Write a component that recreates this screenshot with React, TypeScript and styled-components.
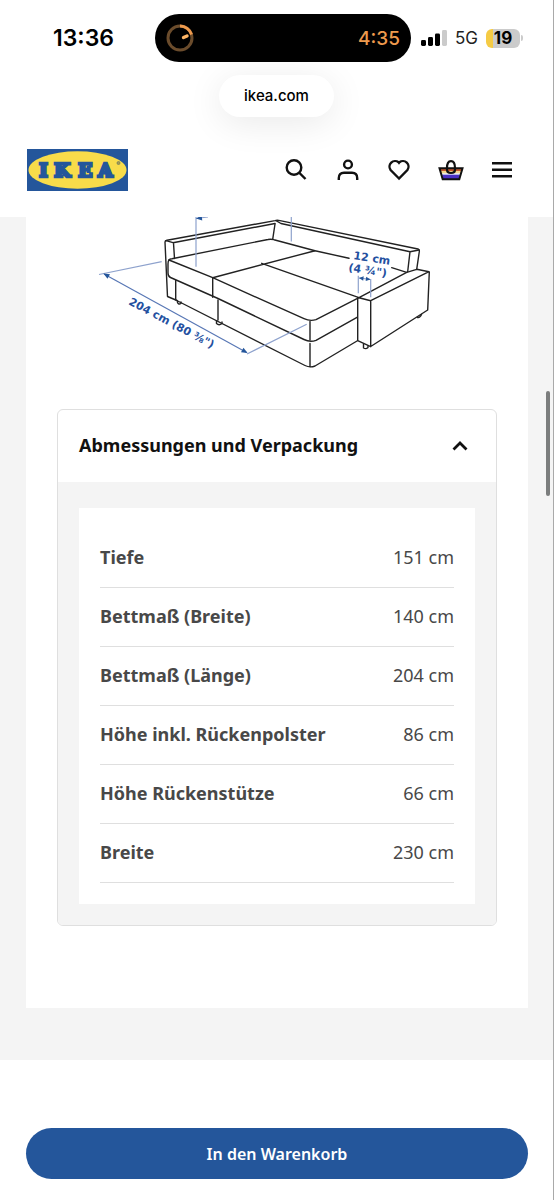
import React, { useState } from "react";
import styled, { createGlobalStyle } from "styled-components";

const GlobalStyle = createGlobalStyle`
  *, *::before, *::after { box-sizing: border-box; }
  body {
    margin: 0;
    background: #fff;
    color: #111;
    font-family: "Noto Sans", "Open Sans", sans-serif;
  }
  button { font: inherit; color: inherit; border: 0; padding: 0; background: none; cursor: pointer; }
`;

const Page = styled.div`
  position: relative;
  min-height: 100vh;
  border-right: 1px solid #a9a9a9;
  overflow-x: hidden;
`;

const StatusBar = styled.div`
  display: grid;
  grid-template-columns: 155fr 256fr 142fr;
  align-items: center;
  padding-top: 14px;
  font-family: Inter, sans-serif;
`;

const Clock = styled.time`
  padding-left: 12px;
  text-align: center;
  font-size: 23px;
  line-height: 28px;
  font-weight: 600;
  color: #000;
`;

const Island = styled.div`
  display: flex;
  align-items: center;
  justify-content: space-between;
  height: 48px;
  padding: 0 11px;
  border-radius: 24px;
  background: #000;
  color: #ee9a4d;
  font-size: 19px;
  font-weight: 500;
`;

const Signals = styled.div`
  display: flex;
  align-items: center;
  gap: 8px;
  padding-left: 10px;
  font-size: 17px;
  line-height: 24px;
  color: #222;
`;

const Battery = styled.div`
  display: flex;
  align-items: center;
  gap: 1px;
`;

const BatteryCell = styled.span`
  width: 34px;
  height: 19px;
  border-radius: 6px;
  background: linear-gradient(90deg, #f5cb45 0 7px, #cbcbcb 7px);
  color: #000;
  font-size: 17px;
  font-weight: 700;
  line-height: 19px;
  text-align: center;
`;

const BatteryTip = styled.span`
  width: 2px;
  height: 6px;
  border-radius: 0 2px 2px 0;
  background: #cbcbcb;
`;

const AddressRow = styled.div`
  display: flex;
  justify-content: center;
  padding-top: 13px;
`;

const Address = styled.div`
  padding: 0 25px;
  border-radius: 21px;
  background: #fff;
  box-shadow: 0 6px 36px rgba(0, 0, 0, 0.09);
  color: #000;
  font-family: Inter, sans-serif;
  font-size: 15px;
  line-height: 42px;
  font-weight: 500;
`;

const Header = styled.header`
  display: flex;
  align-items: center;
  justify-content: space-between;
  height: 100px;
  padding: 6px 37px 0 27px;
`;

const LogoLink = styled.a`
  display: block;
  width: 101px;
  height: 42px;
`;

const Nav = styled.nav`
  display: flex;
  justify-content: space-between;
  width: 234px;
`;

const IconButton = styled.button`
  width: 28px;
  height: 28px;
  svg { display: block; }
`;

const Main = styled.main`
  padding: 0 25px 52px 26px;
  background: #f4f4f4;
`;

const Panel = styled.section`
  padding: 0 31px 82px;
  background: #fff;
`;

const Drawing = styled.svg`
  display: block;
  width: 100%;
  margin-bottom: 31px;
`;

const Card = styled.div`
  border: 1px solid #dfdfdf;
  border-radius: 6px;
  overflow: hidden;
`;

const CardTitle = styled.h2`
  margin: 0;
`;

const Toggle = styled.button`
  display: flex;
  align-items: center;
  justify-content: space-between;
  width: 100%;
  height: 72px;
  padding: 0 25px 2px 21px;
  font-size: 18px;
  line-height: 24px;
  font-weight: 700;
  text-align: left;
`;

const CardBody = styled.div`
  padding: 26px 21px 21px;
  background: #f4f4f4;
`;

const Sheet = styled.div`
  padding: 21px;
  background: #fff;
`;

const Measures = styled.table`
  width: 100%;
  border-collapse: separate;
  border-spacing: 0;
  color: #484848;
  font-size: 18px;
  line-height: 24px;

  th, td {
    height: 59px;
    padding: 0 0 2px;
    border-bottom: 1px solid #dfdfdf;
  }
  th { font-weight: 700; text-align: left; }
  td { text-align: right; }
`;

const Footer = styled.footer`
  padding: 68px 25px 21px 26px;
`;

const BuyButton = styled.button`
  display: block;
  width: 100%;
  height: 51px;
  border-radius: 26px;
  background: #24569b;
  color: #fff;
  font-size: 16px;
  font-weight: 600;
`;

const ScrollThumb = styled.div`
  position: absolute;
  top: 391px;
  right: 3px;
  width: 4px;
  height: 105px;
  border-radius: 2px;
  background: #7b7d7d;
`;

const measures = [
  ["Tiefe", "151 cm"],
  ["Bettmaß (Breite)", "140 cm"],
  ["Bettmaß (Länge)", "204 cm"],
  ["Höhe inkl. Rückenpolster", "86 cm"],
  ["Höhe Rückenstütze", "66 cm"],
  ["Breite", "230 cm"],
];

const Timer = () => (
  <svg width="28" height="28" viewBox="0 0 28 28" fill="none">
    <circle cx="14" cy="14" r="12" stroke="#6b4c2c" strokeWidth="3" />
    <path d="M14 2A12 12 0 0 1 25.5 10.5" stroke="#ee9a4d" strokeWidth="3" />
    <path d="M17.5 13.5 21 12" stroke="#ffb565" strokeWidth="3.4" strokeLinecap="round" />
  </svg>
);

const SignalBars = () => (
  <svg width="26" height="18" viewBox="0 0 26 18">
    <rect x="0" y="11" width="5" height="6" rx="1.4" fill="#000" />
    <rect x="7" y="8" width="5" height="9" rx="1.4" fill="#000" />
    <rect x="14" y="4.500" width="5" height="12.500" rx="1.4" fill="#000" />
    <rect x="21" y="1" width="5" height="16" rx="1.4" fill="#cbcbcb" />
  </svg>
);

const Logo = () => (
  <svg width="101" height="42" viewBox="0 0 101 42">
    <rect width="101" height="42" fill="#24569b" />
    <ellipse cx="50.500" cy="21" rx="49" ry="18.700" fill="#f8dc4a" />
    <text
      x="12 27 51 71" y="27.500" fill="#24569b" stroke="#24569b" strokeWidth="2.600"
      fontFamily="DejaVu Serif, serif" fontWeight="700" fontSize="19"
    >
      IKEA
    </text>
    <circle cx="91.500" cy="14" r="1.500" fill="#a79a4d" stroke="#6e7d62" strokeWidth="0.8" />
  </svg>
);

const Icon = ({ children }: { children: React.ReactNode }) => (
  <svg width="28" height="28" viewBox="0 0 28 28" fill="none" stroke="#111" strokeWidth="2.4">
    {children}
  </svg>
);

const Arrow = ({ x, y, angle }: { x: number; y: number; angle: number }) => (
  <path d="M0 0 6 -2.600 6 2.600Z" fill="#24569b" transform={`translate(${x} ${y}) rotate(${angle})`} />
);

const SofaDrawing = () => (
  <Drawing viewBox="57 217 440 161" role="img" aria-label="Skizze des Ecksofas mit Maßen">
    <g fill="none" stroke="#222" strokeWidth="1.4" strokeLinejoin="round" strokeLinecap="round">
      <path d="M177 300.500 167.500 296.500 165 242Q165 240.700 167 240.300L275 220.600Q277 220 280 220.600L418 249Q419.500 249.500 419.400 251L416.700 269.300" />
      <path d="M166 240.700 173 242.700 275 223.500M173.500 243 174.500 258.500" />
      <path d="M276 220.700 281 223.500 410 251.700 419 250M275 224 272.700 239.300M410 251.700 407.700 271.500" />
      <path d="M169 260Q168 261 168 264V273Q168 276.500 170.500 277.500L218 298.500 304 339.500Q310 342.500 316 340.300L357 317.300" />
      <path d="M169 260Q169.500 259 172 258.700L268 239.500Q271 238.800 274 239.700L315 250.700 349 258.300M391.700 267.700 406.700 272.300" />
      <path d="M169 260 212.700 277.700 304 318.700Q310 321.500 316 319.700L359 297.700M212.700 277.700V297.300M212.700 277.700 315 250.700M261.700 263.300 359 297.700" />
      <path d="M175.700 280.500V300L305 365.500Q310 368 315 366L357 341M218 300V320M310 321.500V340M310 343.500V367" />
      <path d="M359 297.700 406.700 272.300 416.700 269.300 429 271.700 370.700 300.700ZM357.700 298.300V340.700L370.700 346.700V300.700M429.300 272 427.700 310 370.700 346.500" />
      <path d="M177.500 301V302.500Q178.500 305 181 303.500V302M216.500 321V323.500Q219 326 222 323.500V322M363.500 344V348Q366 349.500 368 347.500V346M417.500 317V317.500Q420 318 421.500 314.500" />
    </g>
    <g stroke="#8ea2cd" strokeWidth="1.2">
      <path d="M196 217V266.700M196 218.500 208 217M291.300 217V241.500M99 274.500 161.700 261.700M247 354 306.700 324.300M358.300 275.700V293.300M370.700 279V297.300M359 278 370 279.300" />
      <path d="M104 274 246.700 352.500" stroke="#5877b5" />
    </g>
    <Arrow x={196} y={218.500} angle={-6} />
    <Arrow x={103.500} y={273.500} angle={29} />
    <Arrow x={247.500} y={353} angle={209} />
    <g transform="translate(359 278) rotate(7)" fill="#24569b">
      <path d="M0 0 4.500 -2.200V2.200ZM11.500 0 7 -2.200V2.200Z" />
    </g>
    <g fill="#24509f" fontFamily="DejaVu Sans, sans-serif" fontWeight="700" fontSize="11">
      <text transform="translate(128 304) rotate(28)">204 cm (80 ⅜")</text>
      <text transform="translate(353 259) rotate(9)">12 cm</text>
      <text transform="translate(348 271) rotate(9)">(4 ¾")</text>
    </g>
  </Drawing>
);

export default function App() {
  const [open, setOpen] = useState(true);

  return (
    <Page>
      <GlobalStyle />
      <StatusBar>
        <Clock>13:36</Clock>
        <Island>
          <Timer />
          <span>4:35</span>
        </Island>
        <Signals>
          <SignalBars />
          <span>5G</span>
          <Battery>
            <BatteryCell>19</BatteryCell>
            <BatteryTip />
          </Battery>
        </Signals>
      </StatusBar>
      <AddressRow>
        <Address>ikea.com</Address>
      </AddressRow>

      <Header>
        <LogoLink href="#" aria-label="IKEA Startseite">
          <Logo />
        </LogoLink>
        <Nav aria-label="Hauptmenü">
          <IconButton aria-label="Suchen">
            <Icon>
              <circle cx="12" cy="11.500" r="7.300" />
              <path d="M17 16.500 23.500 23" />
            </Icon>
          </IconButton>
          <IconButton aria-label="Mein Konto">
            <Icon>
              <circle cx="14" cy="8.500" r="3.900" />
              <path d="M4.800 24V22Q4.800 16.700 10 16.700H18Q23.200 16.700 23.200 22V24" />
            </Icon>
          </IconButton>
          <IconButton aria-label="Merkzettel">
            <Icon>
              <path d="M14 22.500 5.600 14A5.600 5.600 0 0 1 13.600 6.300L14 6.800 14.400 6.300A5.600 5.600 0 0 1 22.400 14Z" />
            </Icon>
          </IconButton>
          <IconButton aria-label="Warenkorb">
            <Icon>
              <path d="M2.500 12H25.500L24.500 15H3.500Z" fill="#c4562c" stroke="none" />
              <path d="M3.500 15H24.500L23.600 17.500H4.400Z" fill="#f4d58a" stroke="none" />
              <path d="M4.400 17.500H23.600L23 19H5Z" fill="#dfe3f5" stroke="none" />
              <path d="M5 18.700H23L22 23H6Z" fill="#4a2fc4" stroke="none" />
              <path d="M2.500 12.300H25.500L22.300 23.200H5.700Z" strokeWidth="2" />
              <path d="M10 12Q10 5.200 14 5.200T18 12V13.500Q18 17 14 17T10 13.500Z" strokeWidth="2.200" />
            </Icon>
          </IconButton>
          <IconButton aria-label="Menü">
            <Icon>
              <path d="M4 7.200H24M4 13.700H24M4 20.200H24" />
            </Icon>
          </IconButton>
        </Nav>
      </Header>

      <Main>
        <Panel>
          <SofaDrawing />
          <Card>
            <CardTitle>
              <Toggle aria-expanded={open} onClick={() => setOpen(!open)}>
                Abmessungen und Verpackung
                <svg width="22" height="22" viewBox="0 0 22 22" fill="none" stroke="#111" strokeWidth="2.800">
                  <path d={open ? "M4.500 15.500 11 9 17.500 15.500" : "M4.500 8.500 11 15 17.500 8.500"} />
                </svg>
              </Toggle>
            </CardTitle>
            {open && (
              <CardBody>
                <Sheet>
                  <Measures>
                    <tbody>
                      {measures.map(([label, value]) => (
                        <tr key={label}>
                          <th scope="row">{label}</th>
                          <td>{value}</td>
                        </tr>
                      ))}
                    </tbody>
                  </Measures>
                </Sheet>
              </CardBody>
            )}
          </Card>
        </Panel>
      </Main>

      <Footer>
        <BuyButton>In den Warenkorb</BuyButton>
      </Footer>
      <ScrollThumb />
    </Page>
  );
}
